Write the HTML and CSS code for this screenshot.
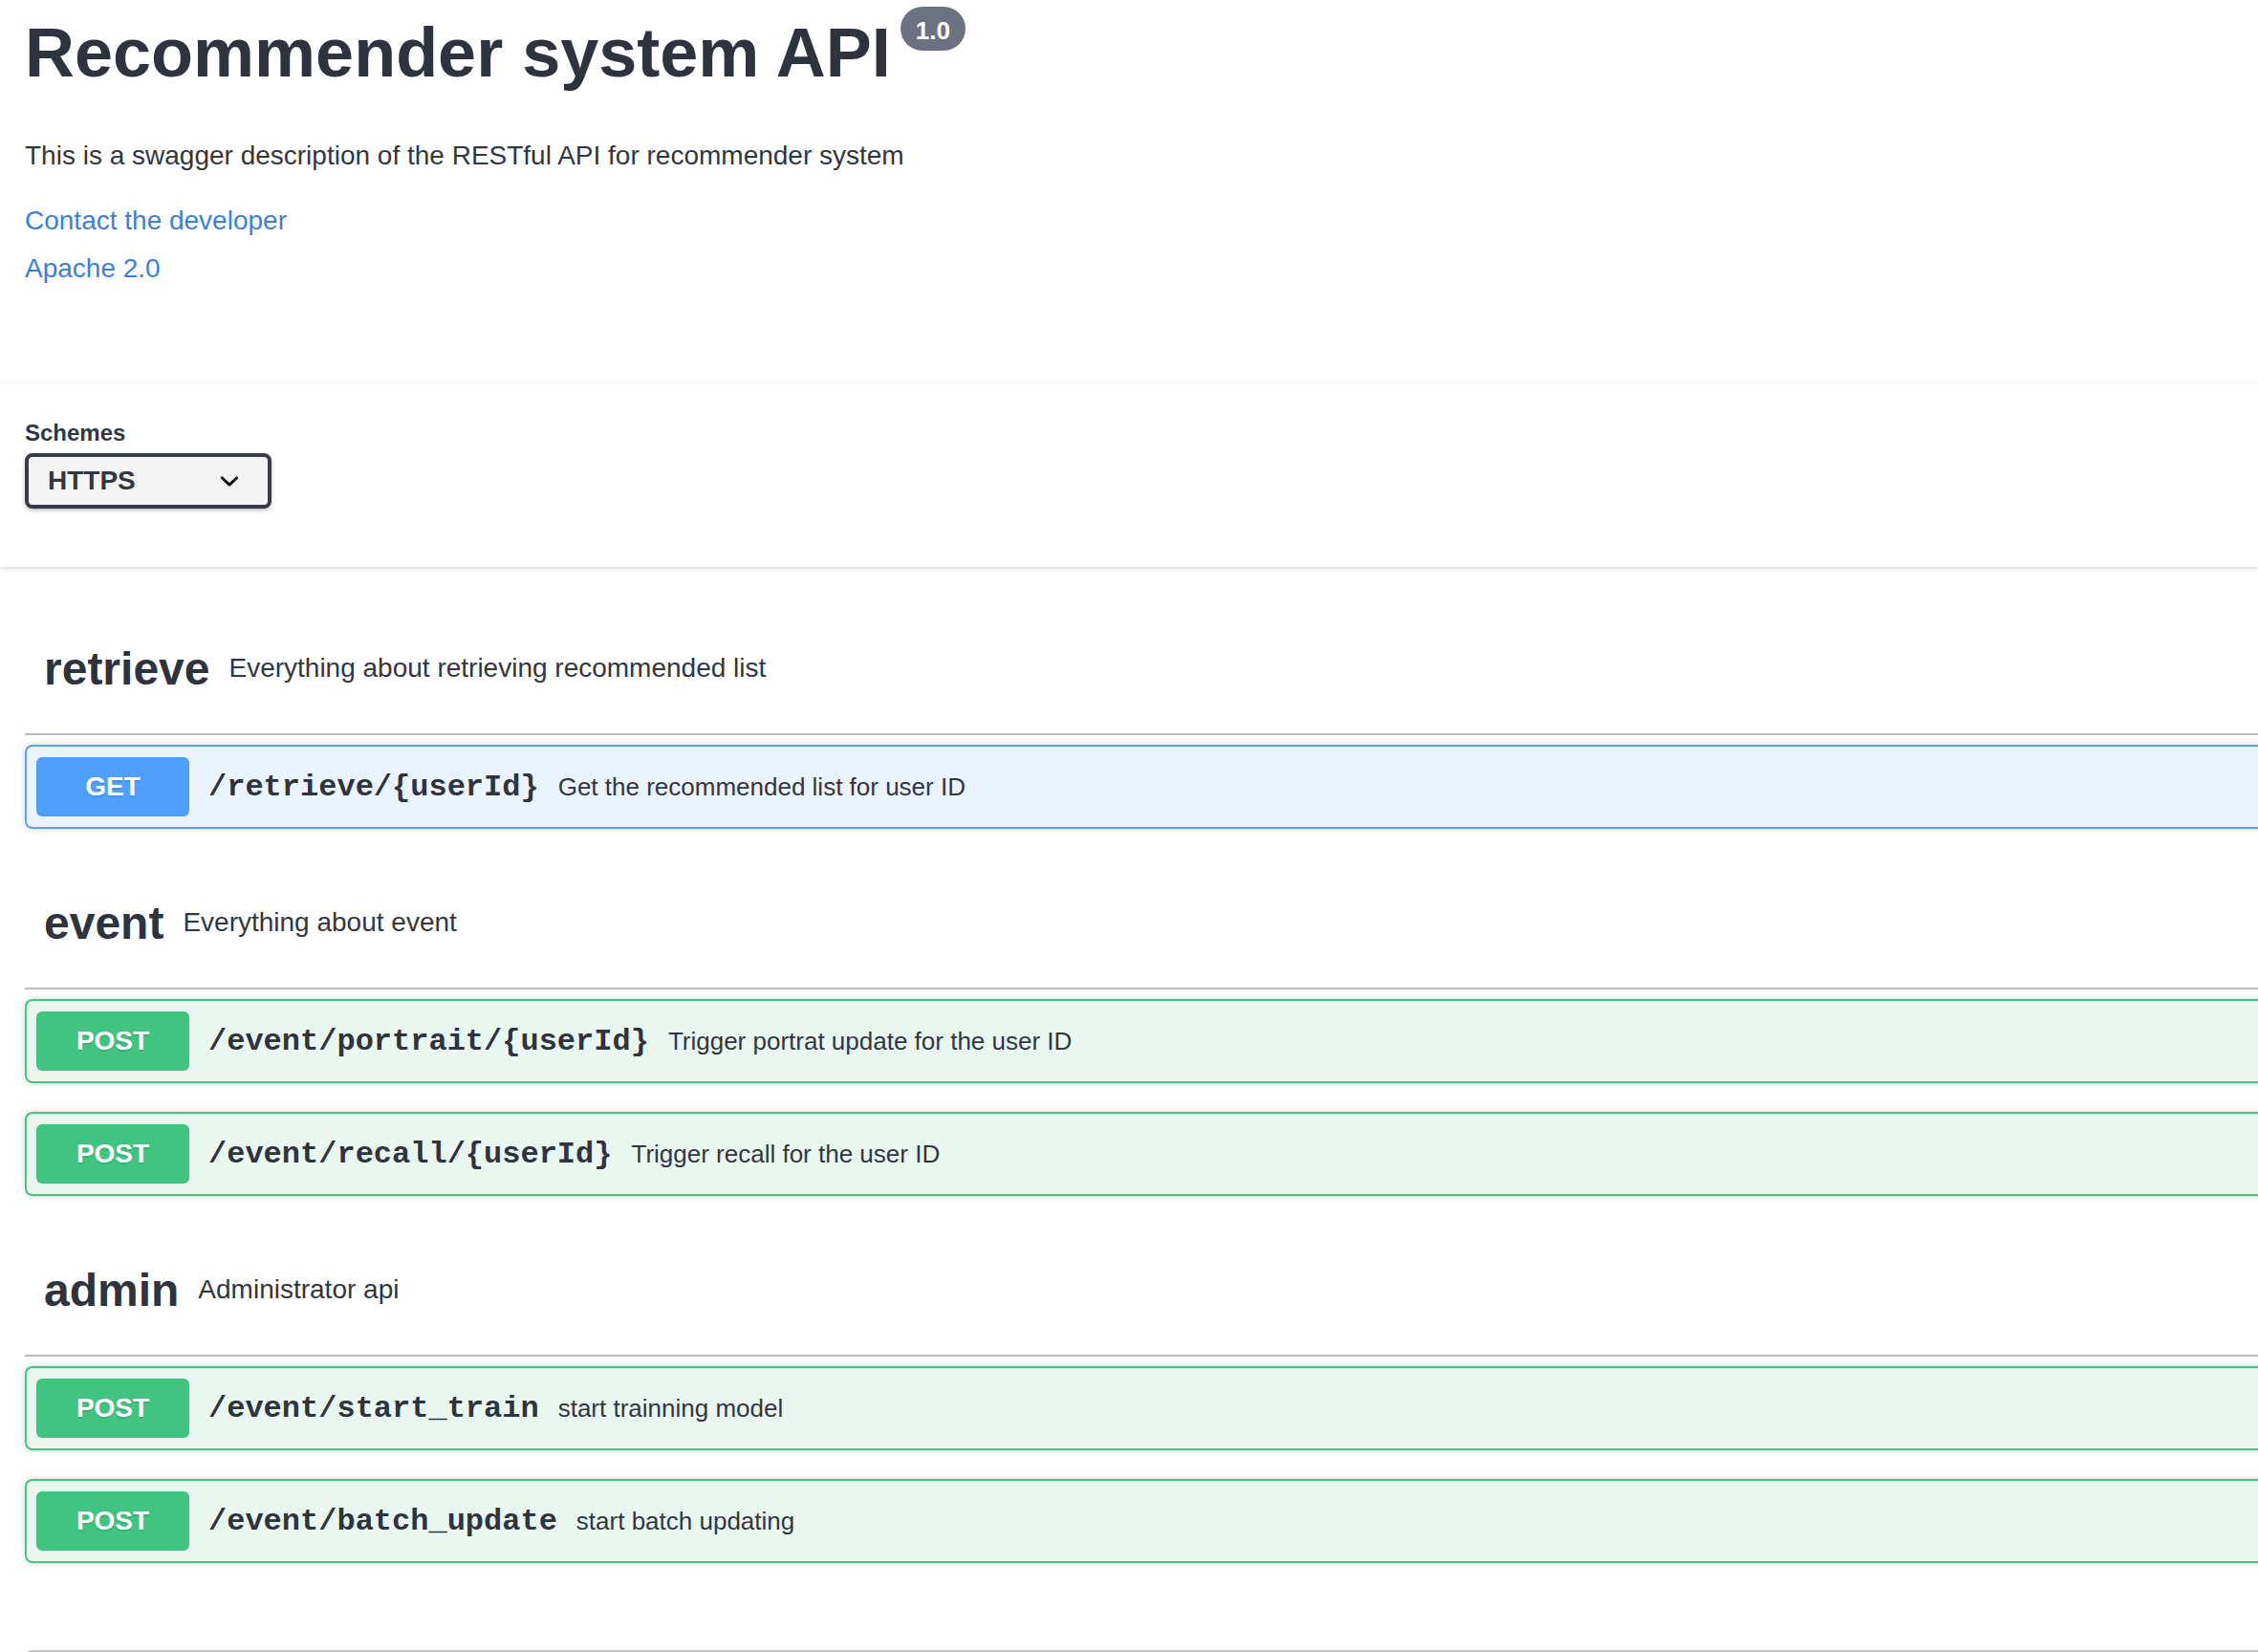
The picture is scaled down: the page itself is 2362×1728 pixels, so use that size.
FILE: index.html
```html
<!DOCTYPE html>
<html lang="en">
<head>
<meta charset="utf-8">
<title>Recommender system API</title>
<link rel="stylesheet" href="styles.css">
</head>
<body>
<div class="info wrapper">
  <h2 class="title"><span class="title-text">Recommender system API</span><span class="version">1.0</span></h2>
  <p class="description">This is a swagger description of the RESTful API for recommender system</p>
  <div class="info-link"><a href="#">Contact the developer</a></div>
  <div class="info-link"><a href="#">Apache 2.0</a></div>
</div>

<div class="scheme-container">
  <div class="wrapper schemes">
    <span class="schemes-title">Schemes</span>
    <div class="select">
      <span>HTTPS</span>
      <svg class="chevron" viewBox="0 0 20 20" width="40" height="40"><path d="M13.418 7.859a.695.695 0 01.978 0 .68.68 0 010 .969l-3.908 3.83a.697.697 0 01-.979 0l-3.908-3.83a.68.68 0 010-.969.695.695 0 01.978 0L10 11l3.418-3.141z"/></svg>
    </div>
  </div>
</div>

<div class="wrapper ops">
  <section class="tag-section">
    <h3 class="tag"><span class="tag-name">retrieve</span><small class="tag-desc">Everything about retrieving recommended list</small></h3>
    <div class="opblock get">
      <span class="method">GET</span>
      <span class="path">/retrieve/{userId}</span>
      <span class="summary">Get the recommended list for user ID</span>
    </div>
  </section>

  <section class="tag-section">
    <h3 class="tag"><span class="tag-name">event</span><small class="tag-desc">Everything about event</small></h3>
    <div class="opblock post">
      <span class="method">POST</span>
      <span class="path">/event/portrait/{userId}</span>
      <span class="summary">Trigger portrat update for the user ID</span>
    </div>
    <div class="opblock post">
      <span class="method">POST</span>
      <span class="path">/event/recall/{userId}</span>
      <span class="summary">Trigger recall for the user ID</span>
    </div>
  </section>

  <section class="tag-section">
    <h3 class="tag"><span class="tag-name">admin</span><small class="tag-desc">Administrator api</small></h3>
    <div class="opblock post">
      <span class="method">POST</span>
      <span class="path">/event/start_train</span>
      <span class="summary">start trainning model</span>
    </div>
    <div class="opblock post">
      <span class="method">POST</span>
      <span class="path">/event/batch_update</span>
      <span class="summary">start batch updating</span>
    </div>
  </section>

  <section class="models"></section>
</div>
</body>
</html>
```

FILE: styles.css
```css
html, body {
  margin: 0;
  padding: 0;
  background: #ffffff;
  overflow: hidden;
}

body {
  font-family: "Liberation Sans", Arial, Helvetica, sans-serif;
  color: #32363f;
}

.wrapper {
  padding-left: 26px;
}

/* ---------- info ---------- */
.info {
  padding-top: 14px;
  padding-bottom: 99px;
}

.title {
  display: flex;
  align-items: flex-start;
  margin: 0;
  font-size: 72px;
  line-height: 83px;
  font-weight: 700;
  color: #2f333e;
}

.version {
  margin: -7px 0 0 10px;
  padding: 8px 16px 4px;
  font-size: 26px;
  line-height: 34px;
  font-weight: 700;
  color: #ffffff;
  background: #6e7280;
  border-radius: 57px;
}

.description {
  margin: 46px 0 0;
  font-size: 28px;
  line-height: 40px;
}

.info-link {
  margin-top: 28px;
  font-size: 28px;
  line-height: 40px;
}

.info-link + .info-link {
  margin-top: 10px;
}

.info-link a {
  color: #3b7fdb;
  text-decoration: none;
}

/* ---------- schemes ---------- */
.scheme-container {
  background: #ffffff;
  border-top: 1px solid rgba(0, 0, 0, 0.035);
  box-shadow: 0 2px 4px 0 rgba(0, 0, 0, 0.15);
  padding: 38px 0 61px;
}

.schemes {
  display: flex;
  flex-direction: column;
  align-items: flex-start;
}

.schemes-title {
  font-size: 24px;
  line-height: 28px;
  font-weight: 700;
  color: #32363f;
}

.select {
  margin-top: 7px;
  box-sizing: border-box;
  width: 258px;
  height: 58px;
  display: flex;
  align-items: center;
  justify-content: space-between;
  padding: 0 20px 0 20px;
  border: 4px solid #393b46;
  border-radius: 8px;
  background: #f4f4f4;
  box-shadow: 0 2px 4px 0 rgba(0, 0, 0, 0.25);
  font-size: 28px;
  font-weight: 700;
  color: #32363f;
}

.chevron {
  display: block;
  fill: #111111;
}

/* ---------- operations ---------- */
.ops {
  width: 2420px;
  margin-top: 38px;
}

.tag {
  box-sizing: border-box;
  height: 138px;
  margin: 0 0 10px;
  padding: 0 20px;
  display: flex;
  align-items: center;
  border-bottom: 2px solid #b8babf;
  font-weight: 400;
}

.tag-name {
  font-size: 48px;
  font-weight: 700;
  color: #2f333e;
}

.tag-desc {
  padding: 0 20px;
  font-size: 28px;
  color: #32363f;
}

.opblock {
  box-sizing: border-box;
  height: 88px;
  margin-bottom: 30px;
  padding: 11px 10px;
  display: flex;
  align-items: center;
  border: 2px solid;
  border-right: none;
  border-radius: 8px 0 0 8px;
  box-shadow: 0 0 6px rgba(0, 0, 0, 0.19);
}

.opblock.get {
  background: #ebf3fe;
  border-color: #56a3fb;
}

.opblock.post {
  background: #e9f7f0;
  border-color: #45c584;
}

.method {
  width: 160px;
  height: 62px;
  flex: none;
  display: flex;
  align-items: center;
  justify-content: center;
  border-radius: 6px;
  font-size: 28px;
  font-weight: 700;
  color: #ffffff;
  text-shadow: 0 2px 0 rgba(0, 0, 0, 0.1);
}

.get .method {
  background: #519ffc;
}

.post .method {
  background: #41c47f;
}

.path {
  padding: 0 20px;
  font-family: "Liberation Mono", "Courier New", monospace;
  font-size: 32px;
  font-weight: 700;
  color: #2f333e;
}

.summary {
  font-size: 26px;
  color: #32363f;
}

.models {
  margin-top: 91px;
  height: 60px;
  border: 2px solid #c4c4c4;
  border-right: none;
  border-radius: 8px 0 0 8px;
}
```
